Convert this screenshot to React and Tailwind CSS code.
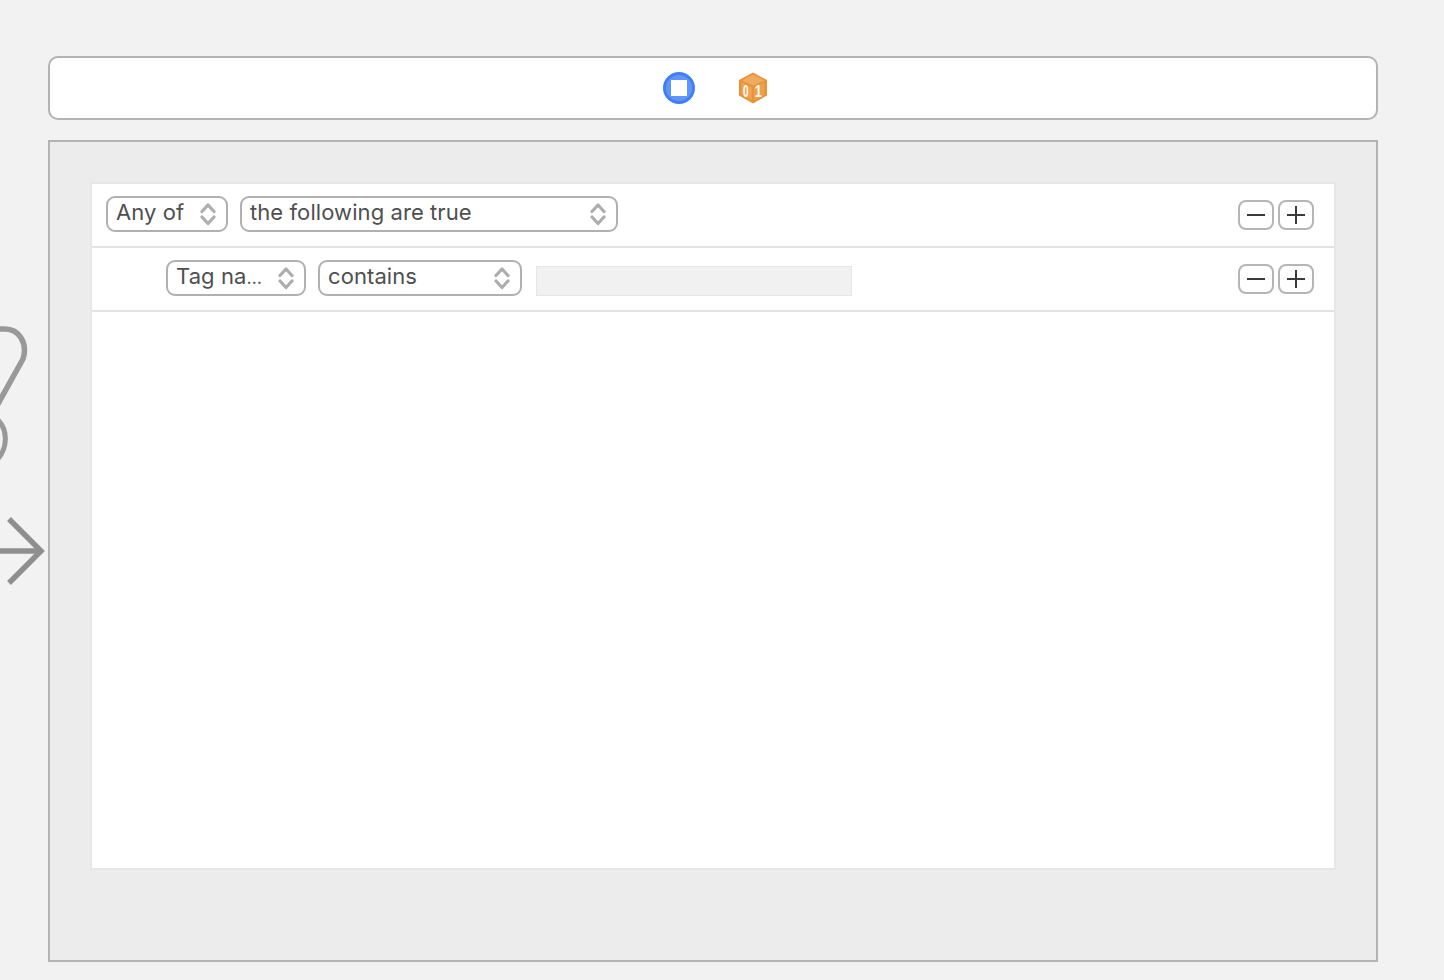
import React from 'react';

function Chevrons() {
  return (
    <svg width="16" height="24" viewBox="0 0 16 24" fill="none" stroke="#adadad" strokeWidth="3.2" strokeLinecap="round" strokeLinejoin="round">
      <path d="M2 9.5 L8 3 L14 9.5" />
      <path d="M2 15 L8 21.5 L14 15" />
    </svg>
  );
}

function Select({ label, width, ml }) {
  return (
    <div className={`flex h-9 items-center justify-between rounded-[9px] border-2 border-[#b0b0b0] bg-white pl-2 pr-[10px] ${width} ${ml}`}>
      <span className="whitespace-nowrap pb-[5px] font-['Inter',sans-serif] text-[22px] leading-none tracking-[0.08px] text-[#4f4f4f]">{label}</span>
      <Chevrons />
    </div>
  );
}

function RoundButton({ children }) {
  return (
    <button className="flex h-[30px] w-9 items-center justify-center rounded-lg border-2 border-[#b5b5b5] bg-white">
      <svg width="20" height="20" viewBox="0 0 20 20" stroke="#3a3a3a" strokeWidth="2">
        {children}
      </svg>
    </button>
  );
}

function RowButtons() {
  return (
    <div className="ml-auto mr-5 flex gap-1">
      <RoundButton><path d="M1 10 H19" /></RoundButton>
      <RoundButton><path d="M1 10 H19 M10 1 V19" /></RoundButton>
    </div>
  );
}

function StopIcon() {
  return (
    <svg width="32" height="32" viewBox="0 0 32 32">
      <circle cx="16" cy="16" r="14.5" fill="#5f96f8" stroke="#3f7ef5" strokeWidth="3" />
      <rect x="8" y="8" width="16" height="16" fill="#fff" />
    </svg>
  );
}

function CubeIcon() {
  return (
    <svg width="28" height="32" viewBox="0 0 28 32">
      <path d="M14 0.5 L28 8 V23.5 L14 31.5 L0 23.5 V8 Z" fill="#e99234" />
      <path d="M14 2.5 L25.5 8.5 L14 13.5 L3 8.5 Z" fill="#efab62" />
      <path d="M12.8 15.5 V28.5 L2.5 22.5 V10 Z" fill="#f0a24f" />
      <path d="M15 15.5 V28.5 L25.5 22.5 V10 Z" fill="#eea04e" />
      <text transform="translate(6.8 24.5) scale(0.62 1.05)" fontSize="16" fontWeight="700" fill="#fff" textAnchor="middle" fontFamily="Liberation Sans">0</text>
      <text transform="translate(19.3 24.5) scale(0.8 1.05)" fontSize="16" fontWeight="700" fill="#fff" textAnchor="middle" fontFamily="Liberation Sans">1</text>
    </svg>
  );
}

export default function App() {
  return (
    <div className="relative h-[980px] w-[1444px] overflow-hidden bg-[#f2f2f2] pl-12 pt-14">
      {/* cut off connector drawing on the canvas */}
      <svg className="absolute left-0 top-[310px]" width="48" height="290" viewBox="0 0 48 290" fill="none">
        <path d="M-4 19 H5 C19 19 28 33 23 49 L-6 101" strokeWidth="5.5" stroke="#999" />
        <path d="M-2 110 C8 120 8 138 -3 150" strokeWidth="5" stroke="#999" />
        <path d="M0 241 H40" strokeWidth="5.5" stroke="#8f8f8f" />
        <path d="M9 209 L41 241 L9 273" strokeWidth="5.5" stroke="#8f8f8f" />
      </svg>

      <div className="relative w-[1330px]">
        <div className="flex h-16 items-center gap-11 rounded-[10px] border-2 border-[#b3b3b3] bg-white pl-[613px]">
          <StopIcon />
          <CubeIcon />
        </div>

        <div className="mt-5 h-[822px] border-2 border-[#b3b3b3] bg-[#ececec] pl-10 pt-10">
          <div className="h-[688px] w-[1246px] border-2 border-[#e6e6e6] bg-white">
            <div className="flex h-16 items-center border-b-2 border-[#e3e3e3]">
              <Select label="Any of" width="w-[122px]" ml="ml-[14px] mt-[-2px]" />
              <Select label="the following are true" width="w-[378px]" ml="ml-3 mt-[-2px]" />
              <RowButtons />
            </div>
            <div className="flex h-16 items-center border-b-2 border-[#e3e3e3]">
              <Select label={<>Tag na<span className="text-[18px]">…</span></>} width="w-[140px]" ml="ml-[74px] mt-[-2px]" />
              <Select label="contains" width="w-[204px]" ml="ml-3 mt-[-2px]" />
              <div className="ml-[14px] mt-1 h-[30px] w-[316px] border border-[#e6e6e6] bg-[#f1f1f1]" />
              <RowButtons />
            </div>
          </div>
        </div>
      </div>
    </div>
  );
}
